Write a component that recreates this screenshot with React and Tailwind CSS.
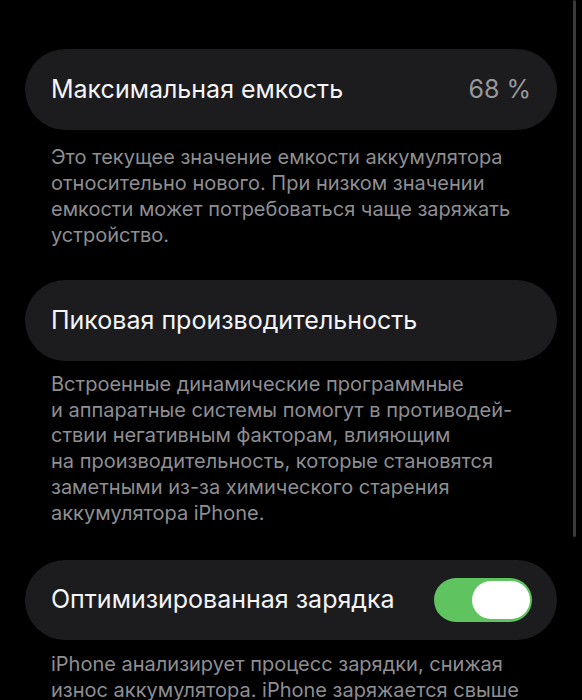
export default function App() {
  return (
    <div className="relative h-[700px] w-[582px] overflow-hidden bg-black font-['Inter','Noto_Sans',sans-serif] antialiased">
      {/* scroll indicator */}
      <div className="absolute right-[6px] top-0 h-[537px] w-[3px] rounded-full bg-[#3a3a3c]" />

      <div className="flex flex-col px-[25px] pt-[49px]">
        {/* Максимальная емкость */}
        <section>
          <div className="flex h-[81px] items-center justify-between rounded-full bg-[#1c1c1e] px-[26px]">
            <span className="text-[25px] text-[#f5f5f7]">Максимальная емкость</span>
            <span className="text-[25px] text-[#98989d]">68 %</span>
          </div>
          <p className="mt-[14px] px-[26px] text-[20px] leading-[26px] text-[#8e8e93]">
            <span className="block whitespace-nowrap">Это текущее значение емкости аккумулятора</span>
            <span className="block whitespace-nowrap">относительно нового. При низком значении</span>
            <span className="block whitespace-nowrap">емкости может потребоваться чаще заряжать</span>
            <span className="block whitespace-nowrap">устройство.</span>
          </p>
        </section>

        {/* Пиковая производительность */}
        <section className="mt-[32px]">
          <div className="flex h-[81px] items-center rounded-full bg-[#1c1c1e] px-[26px]">
            <span className="text-[25px] text-[#f5f5f7]">Пиковая производительность</span>
          </div>
          <p className="mt-[11px] px-[26px] text-[20px] leading-[25.7px] text-[#8e8e93]">
            <span className="block whitespace-nowrap">Встроенные динамические программные</span>
            <span className="block whitespace-nowrap">и аппаратные системы помогут в противодей-</span>
            <span className="block whitespace-nowrap">ствии негативным факторам, влияющим</span>
            <span className="block whitespace-nowrap">на производительность, которые становятся</span>
            <span className="block whitespace-nowrap">заметными из-за химического старения</span>
            <span className="block whitespace-nowrap">аккумулятора iPhone.</span>
          </p>
        </section>

        {/* Оптимизированная зарядка */}
        <section className="mt-[34px]">
          <div className="flex h-[80px] items-center justify-between rounded-full bg-[#1c1c1e] pl-[26px] pr-[25px]">
            <span className="text-[25px] text-[#f5f5f7]">Оптимизированная зарядка</span>
            <div className="flex h-[44px] w-[98px] items-center justify-end rounded-full bg-[#5fc35f] pr-[2px]">
              <div className="h-[38px] w-[58px] rounded-full bg-white" />
            </div>
          </div>
          <p className="mt-[12px] px-[26px] text-[20px] leading-[25.7px] text-[#8e8e93]">
            <span className="block whitespace-nowrap">iPhone анализирует процесс зарядки, снижая</span>
            <span className="block whitespace-nowrap">износ аккумулятора. iPhone заряжается свыше</span>
          </p>
        </section>
      </div>
    </div>
  );
}
